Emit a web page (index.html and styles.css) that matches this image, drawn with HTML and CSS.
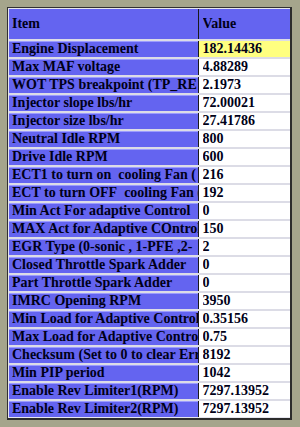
FILE: index.html
```html
<!DOCTYPE html>
<html>
<head>
<meta charset="utf-8">
<link rel="stylesheet" href="styles.css">
</head>
<body>
<div class="frame">
  <table class="grid">
    <colgroup><col class="c-item"><col class="c-val"></colgroup>
    <thead>
      <tr><th class="item"><div class="clip">Item</div></th><th class="val"><div class="clip">Value</div></th></tr>
    </thead>
    <tbody>
      <tr><td class="item"><div class="clip">Engine Displacement</div></td><td class="val sel"><div class="clip">182.14436</div></td></tr>
      <tr><td class="item"><div class="clip">Max MAF voltage</div></td><td class="val"><div class="clip">4.88289</div></td></tr>
      <tr><td class="item"><div class="clip">WOT TPS breakpoint (TP_RE</div></td><td class="val"><div class="clip">2.1973</div></td></tr>
      <tr><td class="item"><div class="clip">Injector slope lbs/hr</div></td><td class="val"><div class="clip">72.00021</div></td></tr>
      <tr><td class="item"><div class="clip">Injector size lbs/hr</div></td><td class="val"><div class="clip">27.41786</div></td></tr>
      <tr><td class="item"><div class="clip">Neutral Idle RPM</div></td><td class="val"><div class="clip">800</div></td></tr>
      <tr><td class="item"><div class="clip">Drive Idle RPM</div></td><td class="val"><div class="clip">600</div></td></tr>
      <tr><td class="item"><div class="clip">ECT1 to turn on&nbsp; cooling Fan (</div></td><td class="val"><div class="clip">216</div></td></tr>
      <tr><td class="item"><div class="clip">ECT to turn OFF&nbsp; cooling Fan (</div></td><td class="val"><div class="clip">192</div></td></tr>
      <tr><td class="item"><div class="clip">Min Act For adaptive Control</div></td><td class="val"><div class="clip">0</div></td></tr>
      <tr><td class="item"><div class="clip">MAX Act for Adaptive COntrol</div></td><td class="val"><div class="clip">150</div></td></tr>
      <tr><td class="item"><div class="clip">EGR Type (0-sonic , 1-PFE ,2-</div></td><td class="val"><div class="clip">2</div></td></tr>
      <tr><td class="item"><div class="clip">Closed Throttle Spark Adder</div></td><td class="val"><div class="clip">0</div></td></tr>
      <tr><td class="item"><div class="clip">Part Throttle Spark Adder</div></td><td class="val"><div class="clip">0</div></td></tr>
      <tr><td class="item"><div class="clip">IMRC Opening RPM</div></td><td class="val"><div class="clip">3950</div></td></tr>
      <tr><td class="item"><div class="clip">Min Load for Adaptive Control</div></td><td class="val"><div class="clip">0.35156</div></td></tr>
      <tr><td class="item"><div class="clip">Max Load for Adaptive Control</div></td><td class="val"><div class="clip">0.75</div></td></tr>
      <tr><td class="item"><div class="clip">Checksum (Set to 0 to clear Errors)</div></td><td class="val"><div class="clip">8192</div></td></tr>
      <tr><td class="item"><div class="clip">Min PIP period</div></td><td class="val"><div class="clip">1042</div></td></tr>
      <tr><td class="item"><div class="clip">Enable Rev Limiter1(RPM)</div></td><td class="val"><div class="clip">7297.13952</div></td></tr>
      <tr><td class="item"><div class="clip">Enable Rev Limiter2(RPM)</div></td><td class="val"><div class="clip">7297.13952</div></td></tr>
    </tbody>
  </table>
</div>
</body>
</html>
```
FILE: styles.css
```css
html, body {
  margin: 0;
  padding: 0;
  background: #a5a58c;
  width: 300px;
  height: 427px;
  overflow: hidden;
}
body {
  padding: 7px 0 0 7px;
  box-sizing: border-box;
}
.frame {
  width: 285px;
  border-left: 1px solid #303030;
  border-top: 1px solid #303030;
  border-right: 2px solid #2c2c2c;
  border-bottom: 2px solid #2c2c2c;
  box-sizing: border-box;
  background: #e6e6ee;
  padding: 1px;
}
.grid {
  border-collapse: collapse;
  table-layout: fixed;
  width: 281px;
  font-family: "Liberation Serif", "Times New Roman", serif;
  font-weight: bold;
  font-size: 14px;
  color: #000018;
}
.c-item { width: 189px; }
.c-val { width: 92px; }
th, td {
  padding: 0 0 0 3px;
  text-align: left;
  vertical-align: middle;
  height: 16px;
  border-bottom: 2px solid #dcdce6;
}
.clip {
  white-space: nowrap;
  overflow: hidden;
  text-overflow: clip;
  line-height: 16px;
  height: 16px;
}
th {
  height: 30px;
  background: #6464f0;
}
td.item {
  background: #6464f0;
  box-shadow: inset 0 1px 0 #9c9cff;
}
th.item, td.item {
  border-right: 1px solid #1a1a1a;
}
td.val {
  background: #ffffff;
  padding-left: 4px;
}
th.val {
  padding-left: 4px;
}
td.val.sel {
  background: #ffff80;
}
tbody tr:last-child td {
  border-bottom: none;
}
```
